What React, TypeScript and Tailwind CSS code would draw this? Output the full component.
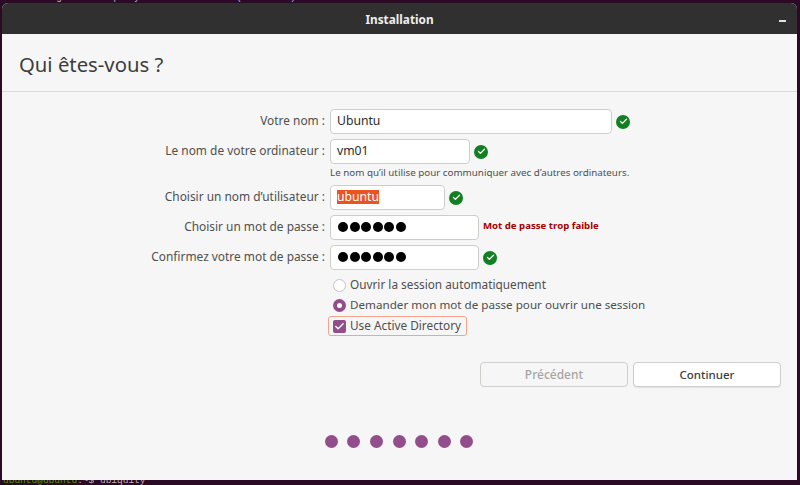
import { Check } from "lucide-react";

const font = "font-['Noto_Sans','Open_Sans',sans-serif]";

function Ok() {
  return (
    <span className="flex h-[14px] w-[14px] shrink-0 items-center justify-center rounded-full bg-[#128022]">
      <Check size={9} strokeWidth={3.5} className="text-white" />
    </span>
  );
}

interface RowProps {
  label: string;
  width: string;
  children: React.ReactNode;
  after?: React.ReactNode;
}

function Row({ label, width, children, after }: RowProps) {
  return (
    <div className="flex h-[25px] items-center">
      <div className="w-[323px] shrink-0 pb-[2px] text-right text-[11.9px] text-[#4f4f4f]">{label}</div>
      <div className={`ml-[5px] flex h-[25px] shrink-0 items-center rounded-[4px] border border-[#cfcdca] bg-white pb-[1px] pl-[6px] text-[12.2px] text-[#2c2c2c] ${width}`}>
        {children}
      </div>
      <div className="ml-[4px] flex items-center">{after}</div>
    </div>
  );
}

function Dots() {
  return (
    <span className="ml-[1px] flex gap-[1.5px]">
      {[0, 1, 2, 3, 4, 5].map((i) => (
        <span key={i} className="h-[10px] w-[10px] rounded-full bg-black" />
      ))}
    </span>
  );
}

export default function App() {
  return (
    <div className={`relative h-[485px] w-[800px] overflow-hidden bg-[#2a0a24] pt-[3px] pl-[2px] ${font}`}>
      <div className="absolute left-[2px] top-[-9px] font-['Liberation_Mono',monospace] text-[10px] leading-[14px] text-[#b8b0b4]">
        Paramétrage de ubiquity-ubuntu-artwork (20.10.10)
      </div>
      <div className="absolute bottom-[0px] left-[3px] font-['Liberation_Mono',monospace] text-[9.5px] leading-[8px] text-[#4e9a06]">
        ubuntu@ubuntu<span className="text-[#b8b0b4]">:~$ ubiquity</span>
      </div>

      <div className="relative flex h-[477px] w-[795px] flex-col overflow-hidden rounded-t-[6px] bg-[#f6f6f6]">
        <div className="relative flex h-[31px] shrink-0 items-center justify-center bg-[#303030] pt-[2px] text-[11.8px] font-bold text-[#eeeeee]">
          Installation
          <span className="absolute right-[11px] top-[17px] h-[2px] w-[7px] bg-[#e0e0e0]" />
        </div>

        <div className="flex h-[58px] shrink-0 items-center border-b border-[#dcdad8] pl-[17px] pt-[3px] text-[20.3px] text-[#3d3d3d]">
          Qui êtes-vous ?
        </div>

        <div className="flex flex-col pt-[17px]">
          <Row label="Votre nom :" width="w-[282px]" after={<Ok />}>Ubuntu</Row>
          <div className="mt-[5px]">
            <Row label="Le nom de votre ordinateur :" width="w-[140px]" after={<Ok />}>vm01</Row>
          </div>
          <div className="ml-[328px] mt-[2px] h-[13px] text-[9.8px] leading-[13px] text-[#4f4f4f]">
            Le nom qu’il utilise pour communiquer avec d’autres ordinateurs.
          </div>
          <div className="mt-[6px]">
            <Row label="Choisir un nom d’utilisateur :" width="w-[115px]" after={<Ok />}>
              <span className="bg-[#e95420] leading-[14px] text-white">ubuntu</span>
            </Row>
          </div>
          <div className="mt-[5px]">
            <Row
              label="Choisir un mot de passe :"
              width="w-[149px]"
              after={<span className="pb-[2px] text-[9.65px] font-bold text-[#a40000]">Mot de passe trop faible</span>}
            >
              <Dots />
            </Row>
          </div>
          <div className="mt-[5px]">
            <Row label="Confirmez votre mot de passe :" width="w-[149px]" after={<Ok />}>
              <Dots />
            </Row>
          </div>

          <div className="ml-[331px] mt-[5px] flex h-[20px] items-center gap-[4px] text-[11.8px] text-[#4f4f4f]">
            <span className="h-[13px] w-[13px] rounded-full border border-[#c4c2bf] bg-white" />
            Ouvrir la session automatiquement
          </div>
          <div className="ml-[331px] flex h-[20px] items-center gap-[4px] text-[11.65px] text-[#4f4f4f]">
            <span className="flex h-[13px] w-[13px] items-center justify-center rounded-full bg-[#924d8b]">
              <span className="h-[5px] w-[5px] rounded-full bg-white" />
            </span>
            Demander mon mot de passe pour ouvrir une session
          </div>
          <div className="ml-[326px] mt-[1px] flex h-[20px] w-[139px] items-center gap-[4px] rounded-[3px] border border-[#f0a58c] pl-[4px] text-[11.8px] text-[#4f4f4f]">
            <span className="flex h-[13px] w-[13px] items-center justify-center rounded-[2px] bg-[#924d8b]">
              <Check size={11} strokeWidth={3} className="text-white" />
            </span>
            Use Active Directory
          </div>
        </div>

        <div className="mt-[26px] flex justify-end gap-[5px] pr-[16px]">
          <div className="flex h-[25px] w-[148px] items-center justify-center rounded-[4px] border border-[#d0cecb] text-[12px] font-medium text-[#a5a5a5]">
            Précédent
          </div>
          <div className="flex h-[25px] w-[148px] items-center justify-center rounded-[4px] border border-[#cfcdca] bg-white text-[11.5px] font-medium text-[#3d3d3d] shadow-[0_1px_1px_rgba(0,0,0,0.08)]">
            Continuer
          </div>
        </div>

        <div className="mt-[48px] flex justify-center gap-[9.6px] pr-[1px]">
          {[0, 1, 2, 3, 4, 5, 6].map((i) => (
            <span key={i} className="h-[13px] w-[13px] rounded-full bg-[#924d8b]" />
          ))}
        </div>
      </div>
    </div>
  );
}
